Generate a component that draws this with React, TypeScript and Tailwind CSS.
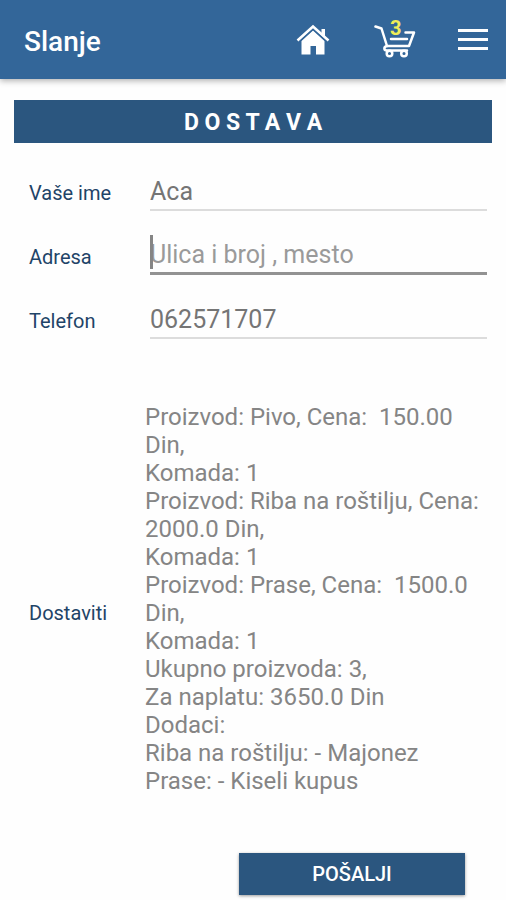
import { useState } from "react";

const orderLines = [
  "Proizvod: Pivo, Cena:  150.00 Din,",
  "Komada: 1",
  "Proizvod: Riba na roštilju, Cena:  2000.0 Din,",
  "Komada: 1",
  "Proizvod: Prase, Cena:  1500.0 Din,",
  "Komada: 1",
  "Ukupno proizvoda: 3,",
  "Za naplatu: 3650.0 Din",
  "Dodaci:",
  "Riba na roštilju: - Majonez",
  "Prase: - Kiseli kupus",
];

function HomeIcon() {
  return (
    <svg width="34" height="34" viewBox="0 0 34 34" fill="#fff" aria-hidden="true">
      <path d="M25.500 6H29v9l-3.500-3z" />
      <path d="M5.500 18 17 7.500 28.500 18v13.500H20V23h-5.500v8.500h-9z" />
      <path d="M1.500 17.500 17 3.500l15.500 14" fill="none" stroke="#fff" strokeWidth="2.600" />
      <path d="M3.200 18.800 17 6.400l13.800 12.400" fill="none" stroke="#336699" strokeWidth="1.100" />
    </svg>
  );
}

function CartIcon() {
  return (
    <svg
      width="42"
      height="34"
      viewBox="0 0 42 34"
      fill="none"
      stroke="#fff"
      strokeWidth="2.500"
      strokeLinecap="round"
      strokeLinejoin="round"
      aria-hidden="true"
    >
      <path d="M1.500 2.500 7.500 4.500 13 22" />
      <path d="M31.500 8.500h8.500L35 22H13c-3.500.5-3.500 4.500 0 4.500h20" />
      <path d="M17 15h16" />
      <circle cx="15.500" cy="29.500" r="2.800" fill="#336699" />
      <circle cx="30" cy="29.500" r="2.800" fill="#336699" />
    </svg>
  );
}

function Header() {
  return (
    <header className="flex h-[79px] items-center justify-between bg-[#336699] pl-6 pr-[18px] text-white shadow-[0_2px_6px_rgba(0,0,0,0.3)]">
      <h1 className="pt-1 text-[28px] leading-8 font-medium">Slanje</h1>
      <nav className="flex items-center">
        <button aria-label="Početna" className="mr-11">
          <HomeIcon />
        </button>
        <button aria-label="Korpa" className="relative mr-[42px] pt-0.5">
          <CartIcon />
          <span className="absolute -top-1 left-4 text-xl leading-5 font-bold text-[#f0ee58]">3</span>
        </button>
        <button aria-label="Meni" className="flex w-[30px] flex-col gap-1.5">
          <span className="h-[3px] bg-white" />
          <span className="h-[3px] bg-white" />
          <span className="h-[3px] bg-white" />
        </button>
      </nav>
    </header>
  );
}

export default function App() {
  const [name, setName] = useState("Aca");
  const [address, setAddress] = useState("");
  const [phone, setPhone] = useState("062571707");

  const label = "w-[121px] shrink-0 pt-1 text-xl text-[#1f4468]";
  const input = "h-10 w-full min-w-0 border-b-2 bg-transparent pt-0.5 text-[25px] text-[#757575] outline-none placeholder:text-[#9a9a9a]";

  return (
    <div className="min-h-screen bg-[#fefefe] font-['Roboto',sans-serif]">
      <Header />
      <main className="pt-[21px]">
        <h2 className="mx-3.5 bg-[#2b567f] pt-[3px] text-center text-[23px] leading-10 font-bold text-white">
          D O S T A V A
        </h2>

        <form className="pt-7" onSubmit={(e) => e.preventDefault()}>
          <div className="flex flex-col gap-6 pl-[29px] pr-[19px]">
            <div className="flex items-center">
              <label htmlFor="name" className={label}>Vaše ime</label>
              <input id="name" className={`${input} border-[#dcdcdc]`} value={name} onChange={(e) => setName(e.target.value)} />
            </div>
            <div className="flex items-center">
              <label htmlFor="address" className={label}>Adresa</label>
              <div className="relative flex flex-1">
                <input
                  id="address"
                  className={`${input} border-b-3 border-[#929292]`}
                  placeholder="Ulica i broj , mesto"
                  value={address}
                  onChange={(e) => setAddress(e.target.value)}
                />
                {address === "" && <span className="absolute top-0 left-0 h-[34px] w-[3px] bg-[#858585]" />}
              </div>
            </div>
            <div className="flex items-center">
              <label htmlFor="phone" className={label}>Telefon</label>
              <input id="phone" type="tel" className={`${input} border-[#dcdcdc]`} value={phone} onChange={(e) => setPhone(e.target.value)} />
            </div>
          </div>

          <div className="mt-16 flex items-center pl-[29px] pr-5">
            <div className="w-[116px] shrink-0 pt-7 text-xl text-[#1f4468]">Dostaviti</div>
            <div className="flex-1 text-2xl leading-7 whitespace-pre-wrap text-[#858585]">
              {orderLines.map((line, i) => (
                <p key={i}>{line}</p>
              ))}
            </div>
          </div>

          <div className="mt-[58px] flex justify-end pr-[41px] pb-1">
            <button type="submit" className="h-[42px] w-[226px] bg-[#2b567f] text-xl font-medium text-white shadow-[0_1px_3px_rgba(0,0,0,0.4)]">
              POŠALJI
            </button>
          </div>
        </form>
      </main>
    </div>
  );
}
